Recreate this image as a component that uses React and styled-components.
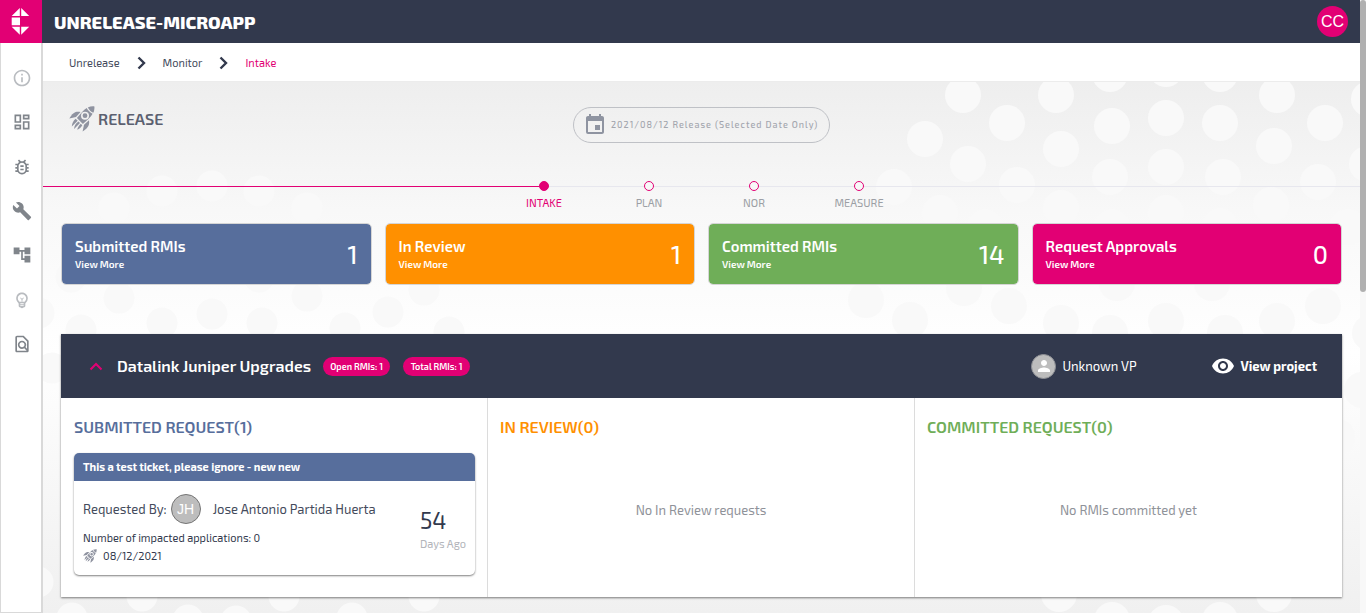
import React from "react";
import styled, { createGlobalStyle } from "styled-components";
import {
  MdInfoOutline,
  MdOutlineDashboard,
  MdOutlineBugReport,
  MdBuild,
  MdAccountTree,
  MdOutlineFindInPage,
  MdOutlineEmojiObjects,
  MdEvent,
  MdVisibility,
  MdPerson,
} from "react-icons/md";

const navy = "#32394d";
const pink = "#e20074";
const blue = "#576e9c";
const orange = "#ff9000";
const green = "#6fae58";

const GlobalStyle = createGlobalStyle`
  *, *::before, *::after { box-sizing: border-box; }
  body {
    margin: 0;
    background: #fff;
    color: ${navy};
    font-family: "Exo 2", "Open Sans", "Noto Sans", sans-serif;
    font-size: 11px;
    line-height: 16px;
  }
  button { font: inherit; color: inherit; background: none; border: 0; padding: 0; cursor: pointer; }
  a { color: inherit; text-decoration: none; }
  h1, h2, h3, h4, p, ol, ul { margin: 0; padding: 0; list-style: none; }
  svg { display: block; flex: none; }
`;

const Shell = styled.div`
  display: flex;
  min-height: 100vh;
`;

const Page = styled.div`
  flex: 1;
  min-width: 0;
  display: flex;
  flex-direction: column;
`;

const ScrollTrack = styled.div`
  width: 6px;
  background: #f8f8f8;
`;

const ScrollThumb = styled.div`
  height: 292px;
  border-radius: 3px;
  background: #b0b0b0;
`;

const TopBar = styled.header`
  display: flex;
  align-items: center;
  height: 43px;
  padding-right: 12px;
  background: ${navy};
  color: #fff;
`;

const LogoLink = styled.a`
  width: 42px;
  height: 43px;
  background: ${pink};
`;

const AppTitle = styled.h1`
  flex: 1;
  padding-left: 12px;
  font-size: 18px;
  line-height: 24px;
  font-weight: 800;
`;

const UserButton = styled.button`
  width: 31px;
  height: 31px;
  border-radius: 50%;
  background: ${pink};
  color: #fff;
  font-family: "Liberation Sans", Arial, sans-serif;
  font-size: 16px;
`;

const Body = styled.div`
  flex: 1;
  display: flex;
`;

const Sidebar = styled.nav`
  width: 43px;
  padding-top: 25px;
  border: 1px solid #d9d9d9;
  border-top: 0;
  border-right-width: 2px;
  background: #fff;
`;

const NavList = styled.ul`
  display: flex;
  flex-direction: column;
  align-items: center;
  justify-content: space-between;
  height: 286px;
`;

const NavButton = styled.button`
  display: grid;
  place-items: center;
  width: 20px;
  height: 20px;
  margin-left: 2px;
  color: ${(p) => (p.$faint ? "#b9bcc0" : "#80858b")};
`;

const Content = styled.div`
  flex: 1;
  min-width: 0;
  display: flex;
  flex-direction: column;
`;

const Breadcrumbs = styled.nav`
  height: 39px;
  padding: 1px 26px 0;
  display: flex;
  align-items: center;
  border-bottom: 1px solid #ececec;
  background: #fff;
`;

const CrumbList = styled.ol`
  display: flex;
  align-items: center;
  gap: 17px;
`;

const Crumb = styled.a`
  color: ${(p) => (p.$current ? pink : "#444b5c")};
`;

const Main = styled.main`
  position: relative;
  isolation: isolate;
  flex: 1;
  padding: 25px 18px 15px;
  background: linear-gradient(#eeeeee, #f8f8f8 128px, #ffffff 270px, #f0f0f0 531px);
`;

const Backdrop = styled.svg`
  position: absolute;
  inset: 0;
  z-index: -1;
  width: 100%;
  height: 100%;
`;

const Hero = styled.div`
  display: grid;
  grid-template-columns: 1fr auto 1fr;
  padding: 0 8px;
`;

const HeroTitle = styled.h2`
  display: flex;
  align-items: center;
  gap: 3px;
  height: 23px;
  font-size: 16px;
  line-height: 20px;
  font-weight: 600;
  color: #5b6070;
`;

const DatePicker = styled.button`
  display: flex;
  align-items: center;
  gap: 4px;
  width: 257px;
  height: 36px;
  padding: 0 9px;
  border: 1px solid #bfc1c6;
  border-radius: 18px;
  color: #a3a6ae;
  font-size: 9px;
  font-weight: 500;
  letter-spacing: 1px;
  white-space: nowrap;
  svg { color: #8f94a1; }
`;

const Steps = styled.ol`
  display: flex;
  margin: 38px -18px 13px;
  &::before, &::after {
    content: "";
    flex: 1;
    height: 1px;
    margin-top: 5px;
    background: #e7e7ee;
  }
  &::before { background: ${pink}; }
`;

const Step = styled.li`
  width: 105px;
  text-align: center;
  line-height: 14px;
  color: ${(p) => (p.$active ? pink : "#9c9fa5")};
`;

const StepMarker = styled.div`
  display: flex;
  height: 10px;
  margin-bottom: 5px;
  &::before, &::after {
    content: "";
    flex: 1;
    height: 1px;
    margin-top: 5px;
    background: #e7e7ee;
  }
  &::before { background: ${(p) => (p.$active ? pink : "#e7e7ee")}; }
`;

const StepDot = styled.span`
  width: 10px;
  height: 10px;
  border: 1px solid ${pink};
  border-radius: 50%;
  background: ${(p) => (p.$active ? pink : "#f8f8f8")};
`;

const StatGrid = styled.section`
  display: grid;
  grid-template-columns: repeat(4, 1fr);
  gap: 13px;
`;

const StatCard = styled.article`
  display: flex;
  align-items: center;
  justify-content: space-between;
  height: 62px;
  padding: 0 13px;
  border: 1px solid #d5d5d5;
  border-radius: 5px;
  background: ${(p) => p.$color};
  background-clip: padding-box;
  color: #fff;
`;

const StatTitle = styled.h3`
  font-size: 15px;
  line-height: 20px;
  font-weight: 600;
`;

const StatLink = styled.a`
  display: block;
  font-size: 10px;
  line-height: 16px;
  font-weight: 600;
`;

const StatValue = styled.strong`
  font-size: 25px;
  line-height: 32px;
  font-weight: 500;
`;

const Project = styled.section`
  margin-top: 49px;
  background: #fff;
  box-shadow: 0 1px 2px rgba(0, 0, 0, 0.5);
`;

const ProjectHeader = styled.header`
  display: flex;
  align-items: center;
  height: 64px;
  padding: 0 25px 0 28px;
  background: ${navy};
  color: #fff;
`;

const ProjectTitle = styled.h3`
  margin: 0 12px 0 14px;
  font-size: 16px;
  line-height: 20px;
  font-weight: 600;
`;

const Chip = styled.span`
  width: 67px;
  margin-right: 13px;
  border-radius: 10px;
  background: ${pink};
  font-size: 9px;
  line-height: 19px;
  font-weight: 600;
  text-align: center;
`;

const Owner = styled.div`
  display: flex;
  align-items: center;
  gap: 6px;
  width: 180px;
  margin-left: auto;
  font-size: 13px;
`;

const OwnerAvatar = styled.span`
  display: grid;
  place-items: center;
  width: 25px;
  height: 25px;
  border: 1px solid #8d8f94;
  border-radius: 50%;
  background: #bdbdbd;
`;

const ProjectLink = styled.a`
  display: flex;
  align-items: center;
  gap: 5px;
  font-size: 13px;
  font-weight: 700;
`;

const Columns = styled.div`
  display: grid;
  grid-template-columns: repeat(3, 1fr);
`;

const Column = styled.section`
  display: flex;
  flex-direction: column;
  min-height: 199px;
  padding: 19px 12px 22px;
  border-right: 1px solid #dcdcdc;
  &:first-child { padding-left: 13px; }
  &:last-child { border-right: 0; }
`;

const ColumnTitle = styled.h4`
  margin-bottom: 16px;
  font-size: 16px;
  line-height: 20px;
  font-weight: 600;
  color: ${(p) => p.$color};
`;

const EmptyText = styled.p`
  margin: auto;
  padding-bottom: 8px;
  font-size: 13px;
  color: #8f9299;
`;

const Ticket = styled.article`
  border-radius: 5px;
  box-shadow: 0 1px 2px rgba(0, 0, 0, 0.5);
`;

const TicketTitle = styled.h5`
  margin: 0;
  padding: 0 9px;
  border-radius: 5px 5px 0 0;
  background: ${blue};
  color: #fff;
  font-size: 11px;
  line-height: 28px;
  font-weight: 700;
`;

const TicketBody = styled.div`
  display: flex;
  align-items: center;
  justify-content: space-between;
  padding: 12px 9px 10px;
`;

const Requester = styled.div`
  display: flex;
  align-items: center;
  height: 32px;
  margin-bottom: 4px;
  font-size: 13px;
  color: #444b5c;
`;

const Initials = styled.span`
  display: grid;
  place-items: center;
  width: 30px;
  height: 30px;
  margin: 0 12px 0 4px;
  border: 1px solid #757575;
  border-radius: 50%;
  background: #bdbdbd;
  color: #fff;
  font-family: "Liberation Sans", Arial, sans-serif;
  font-size: 14px;
`;

const TicketLine = styled.p`
  display: flex;
  align-items: center;
  gap: 6px;
  height: 18px;
`;

const Age = styled.div`
  padding-top: 2px;
  color: #b3b5ba;
  strong {
    display: block;
    font-size: 23px;
    line-height: 28px;
    font-weight: 400;
    color: ${navy};
  }
  span { display: block; line-height: 20px; }
`;

const dots = [
  [963, 95], [1007, 123], [925, 139], [1056, 95], [1110, 74], [1112, 126], [1061, 149],
  [968, 164], [894, 187], [1017, 185], [1110, 177], [1166, 118], [1166, 69], [1220, 74],
  [1220, 123], [1166, 167], [1277, 95], [1274, 146], [1325, 123], [1223, 177], [1318, 182],
  [1369, 99], [1367, 164], [940, 213], [1061, 208], [1166, 213], [1271, 205], [985, 227],
  [1112, 227], [1220, 226], [1348, 227], [1009, 306], [1061, 323], [1110, 333], [1117, 283],
  [1166, 321], [1212, 283], [1225, 333], [1277, 321], [1323, 306], [1370, 333], [1362, 390],
  [1337, 437], [866, 300], [910, 320], [964, 288], [1059, 594], [1112, 620], [1166, 623],
  [1220, 620], [1274, 594],
];

const smallDots = [
  [114, 208], [162, 191], [212, 186], [259, 191], [307, 208], [119, 298], [162, 323],
  [212, 314], [262, 323], [81, 330], [39, 313], [307, 296], [345, 328], [388, 312],
  [424, 290], [449, 332], [52, 368], [71, 277], [259, 277], [142, 596], [284, 596],
  [424, 596], [72, 618], [188, 620], [236, 621], [352, 618], [38, 582],
];

function DotPattern() {
  return (
    <Backdrop viewBox="43 82 1317 531" preserveAspectRatio="xMidYMin slice" aria-hidden="true">
      <g fill="#f9f9f9">
        {dots.map(([x, y]) => <circle key={`${x}-${y}`} cx={x} cy={y} r="18" />)}
        {smallDots.map(([x, y]) => <circle key={`${x}-${y}`} cx={x} cy={y} r="15.5" />)}
      </g>
    </Backdrop>
  );
}

function Rocket({ size, color = "#8f93a0" }) {
  return (
    <svg width={size} height={size} viewBox="0 0 26 26" fill={color} aria-hidden="true">
      <path d="M18.8 1.4C20.8.5 23 .2 25.4.4c.2 2.3-.2 4.500-1.100 6.400C22.200 5.900 19.800 3.500 18.800 1.400z" />
      <path fillRule="evenodd" d="M17.700 2c1.100 2.300 3.500 4.700 5.900 5.800-.9 1.800-2.200 3.400-3.900 5l-5.800 5.100-6-6 5.200-5.900C14.600 4.300 16 3 17.700 2zM16 5.700a4 4 0 1 0 0 8 4 4 0 0 0 0-8zm0 1.600a2.400 2.400 0 1 1 0 4.800 2.400 2.400 0 0 1 0-4.800z" />
      <path d="M11.500 6 7 11 .3 12.400C2.300 9.300 4.200 7 6.700 6.100c1.500-.5 3.200-.4 4.800-.1z" />
      <path d="m20 14.300-5 4.400-1.400 6.800c3-2 5.400-3.900 6.200-6.400.5-1.500.5-3.100.2-4.800z" />
      <path d="m6.700 12.800 2 2-5.900 5.600c.2-2.900 1.500-5.600 3.900-7.600zM9.500 15.500l1.500 1.500-5.900 5.900c.1-2.900 1.700-5.500 4.400-7.400zM11.800 17.700l1.500 1.500c-1.200 2.200-2.800 3.600-5.100 4.600.6-2.400 1.800-4.500 3.600-6.100z" />
    </svg>
  );
}

function Logo() {
  return (
    <svg width="42" height="43" viewBox="0 0 42 43" fill="#fff" aria-hidden="true">
      <path d="M11.700 16 19.800 8v8zM21.200 8l8 8h-8zM11.700 17.500h8.300v7.700h-8.300zM11.700 26.800h8.100v8zM21.200 26.800h8l-8 8z" />
    </svg>
  );
}

function Chevron({ up }) {
  return up ? (
    <svg width="14" height="9" viewBox="0 0 14 9" fill="none" stroke={pink} strokeWidth="2" aria-hidden="true">
      <path d="m1.500 7.500 5.500-5.500 5.500 5.500" />
    </svg>
  ) : (
    <svg width="9" height="14" viewBox="0 0 9 14" fill="none" stroke={navy} strokeWidth="2.400" aria-hidden="true">
      <path d="m1.500 1.500 5.500 5.500-5.500 5.500" />
    </svg>
  );
}

const navItems = [
  { label: "Information", Icon: MdInfoOutline, faint: true },
  { label: "Dashboard", Icon: MdOutlineDashboard },
  { label: "Defects", Icon: MdOutlineBugReport },
  { label: "Tools", Icon: MdBuild },
  { label: "Hierarchy", Icon: MdAccountTree },
  { label: "Ideas", Icon: MdOutlineEmojiObjects, faint: true },
  { label: "Search", Icon: MdOutlineFindInPage },
];

const stats = [
  { title: "Submitted RMIs", value: 1, color: blue },
  { title: "In Review", value: 1, color: orange },
  { title: "Committed RMIs", value: 14, color: green },
  { title: "Request Approvals", value: 0, color: pink },
];

const steps = ["INTAKE", "PLAN", "NOR", "MEASURE"];

export default function App() {
  return (
    <>
      <GlobalStyle />
      <Shell>
        <Page>
          <TopBar>
            <LogoLink href="#" aria-label="Home"><Logo /></LogoLink>
            <AppTitle>UNRELEASE-MICROAPP</AppTitle>
            <UserButton>CC</UserButton>
          </TopBar>
          <Body>
            <Sidebar aria-label="Sections">
              <NavList>
                {navItems.map(({ label, Icon, faint }) => (
                  <li key={label}>
                    <NavButton aria-label={label} $faint={faint}><Icon size={20} /></NavButton>
                  </li>
                ))}
              </NavList>
            </Sidebar>
            <Content>
              <Breadcrumbs aria-label="Breadcrumb">
                <CrumbList>
                  <li><Crumb href="#unrelease">Unrelease</Crumb></li>
                  <li><Chevron /></li>
                  <li><Crumb href="#monitor">Monitor</Crumb></li>
                  <li><Chevron /></li>
                  <li><Crumb href="#intake" $current aria-current="page">Intake</Crumb></li>
                </CrumbList>
              </Breadcrumbs>
              <Main>
                <DotPattern />
                <Hero>
                  <HeroTitle><Rocket size={26} />RELEASE</HeroTitle>
                  <DatePicker>
                    <MdEvent size={24} />
                    2021/08/12 Release (Selected Date Only)
                  </DatePicker>
                </Hero>
                <Steps>
                  {steps.map((name, i) => (
                    <Step key={name} $active={i === 0}>
                      <StepMarker $active={i === 0}><StepDot $active={i === 0} /></StepMarker>
                      {name}
                    </Step>
                  ))}
                </Steps>
                <StatGrid>
                  {stats.map((s) => (
                    <StatCard key={s.title} $color={s.color}>
                      <div>
                        <StatTitle>{s.title}</StatTitle>
                        <StatLink href="#more">View More</StatLink>
                      </div>
                      <StatValue>{s.value}</StatValue>
                    </StatCard>
                  ))}
                </StatGrid>
                <Project>
                  <ProjectHeader>
                    <button aria-label="Collapse project"><Chevron up /></button>
                    <ProjectTitle>Datalink Juniper Upgrades</ProjectTitle>
                    <Chip>Open RMIs: 1</Chip>
                    <Chip>Total RMIs: 1</Chip>
                    <Owner>
                      <OwnerAvatar><MdPerson size={18} /></OwnerAvatar>
                      Unknown VP
                    </Owner>
                    <ProjectLink href="#project"><MdVisibility size={24} />View project</ProjectLink>
                  </ProjectHeader>
                  <Columns>
                    <Column>
                      <ColumnTitle $color={blue}>SUBMITTED REQUEST(1)</ColumnTitle>
                      <Ticket>
                        <TicketTitle>This a test ticket, please ignore - new new</TicketTitle>
                        <TicketBody>
                          <div>
                            <Requester>
                              Requested By:<Initials>JH</Initials>Jose Antonio Partida Huerta
                            </Requester>
                            <TicketLine>Number of impacted applications: 0</TicketLine>
                            <TicketLine><Rocket size={14} />08/12/2021</TicketLine>
                          </div>
                          <Age><strong>54</strong><span>Days Ago</span></Age>
                        </TicketBody>
                      </Ticket>
                    </Column>
                    <Column>
                      <ColumnTitle $color={orange}>IN REVIEW(0)</ColumnTitle>
                      <EmptyText>No In Review requests</EmptyText>
                    </Column>
                    <Column>
                      <ColumnTitle $color={green}>COMMITTED REQUEST(0)</ColumnTitle>
                      <EmptyText>No RMIs committed yet</EmptyText>
                    </Column>
                  </Columns>
                </Project>
              </Main>
            </Content>
          </Body>
        </Page>
        <ScrollTrack><ScrollThumb /></ScrollTrack>
      </Shell>
    </>
  );
}
